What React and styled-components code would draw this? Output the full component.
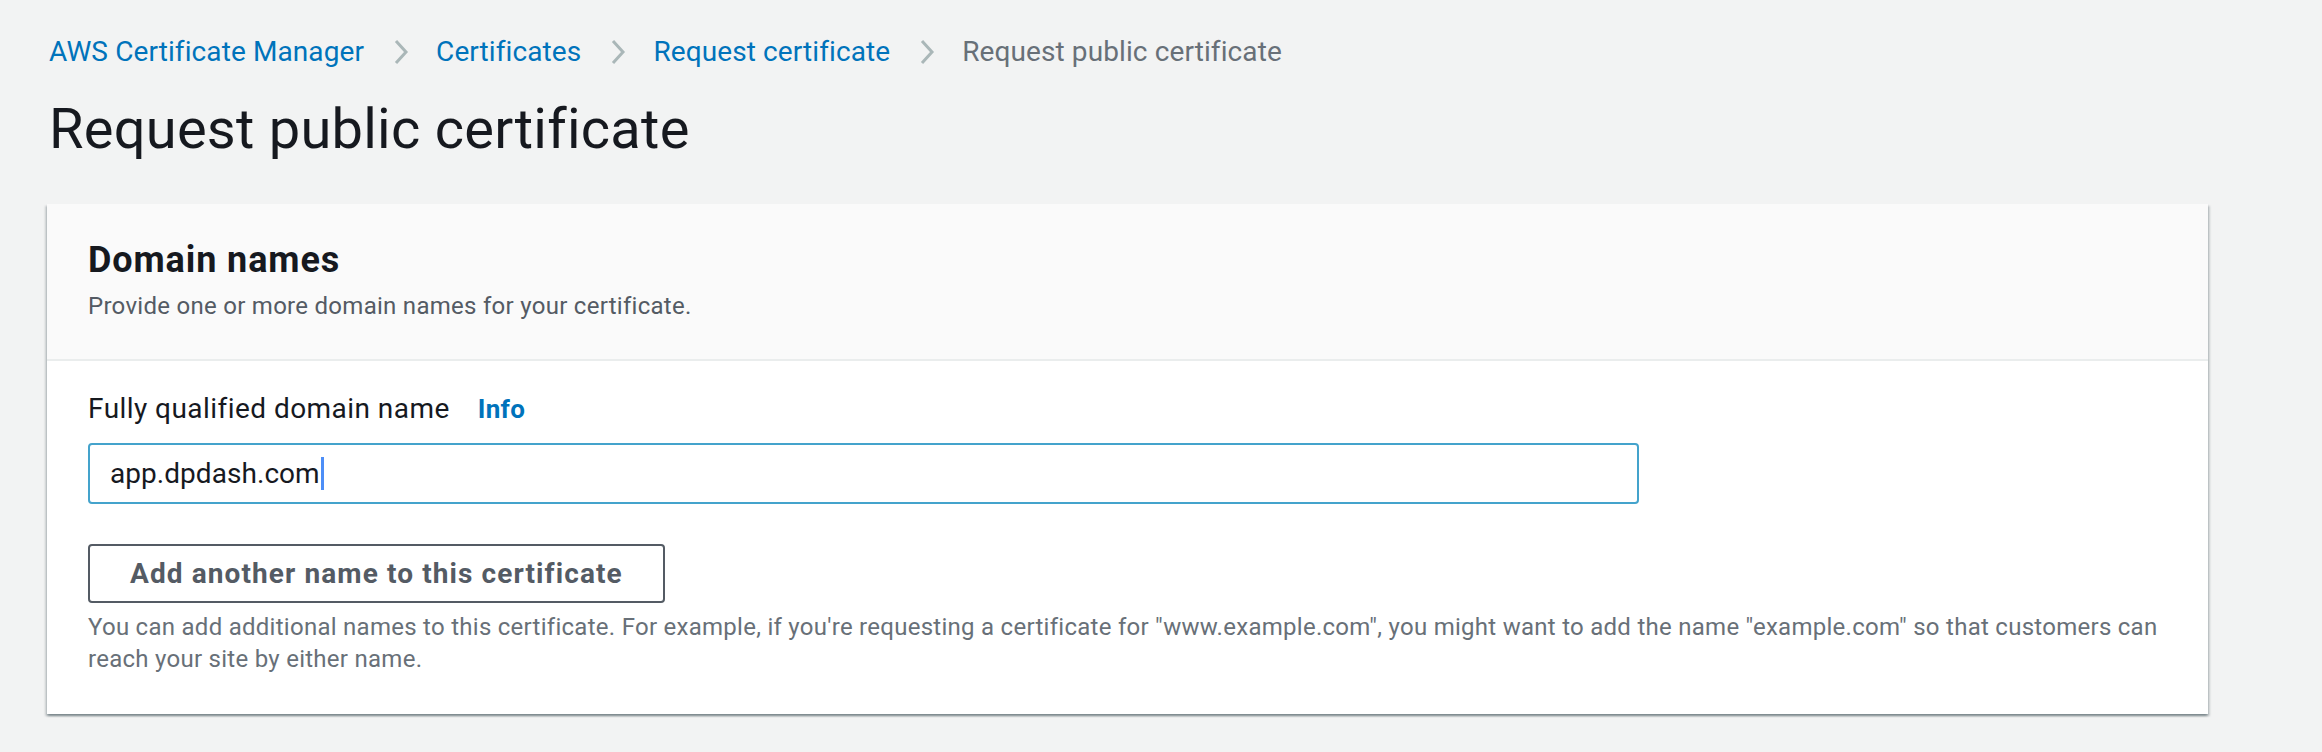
import React from 'react';
import styled, { createGlobalStyle } from 'styled-components';

const GlobalStyle = createGlobalStyle`
  body {
    margin: 0;
    background: #f2f3f3;
    font-family: Roboto, "Liberation Sans", Arial, sans-serif;
    color: #16191f;
  }
`;

const Page = styled.div`
  padding: 32px 114px 40px 47px;
`;

const Crumbs = styled.nav`
  display: flex;
  align-items: center;
  height: 40px;
  padding-left: 2px;
  font-size: 28px;
  line-height: 40px;
  letter-spacing: 0.1px;
`;

const Crumb = styled.a`
  color: ${(p) => (p.current ? '#687078' : '#0073bb')};
  text-decoration: none;
  white-space: nowrap;
`;

const Chevron = styled.svg`
  width: 16px;
  height: 28px;
  margin: 0 27px 0 29px;
  flex-shrink: 0;
`;

const Title = styled.h1`
  margin: 21px 0 39px 2px;
  font-size: 56px;
  line-height: 72px;
  font-weight: 400;
  letter-spacing: 0.25px;
  color: #16191f;
`;

const Card = styled.section`
  background: #fff;
  box-shadow: 0 2px 2px 0 rgba(0, 28, 36, 0.3), 2px 2px 2px 0 rgba(0, 28, 36, 0.15),
    -2px 2px 2px 0 rgba(0, 28, 36, 0.15);
`;

const CardHeader = styled.header`
  background: #fafafa;
  border-bottom: 2px solid #eaeded;
  padding: 34px 40px 37px 41px;
`;

const Heading = styled.h2`
  margin: 0 0 8px;
  font-size: 36px;
  line-height: 44px;
  font-weight: 700;
  letter-spacing: 0.9px;
`;

const Description = styled.p`
  margin: 0;
  font-size: 24px;
  line-height: 32px;
  letter-spacing: 0.28px;
  color: #545b64;
`;

const CardBody = styled.div`
  padding: 28px 40px 39px 41px;
`;

const LabelRow = styled.div`
  display: flex;
  align-items: baseline;
  gap: 28px;
  font-size: 28px;
  line-height: 40px;
`;

const Label = styled.label`
  color: #16191f;
  letter-spacing: 0.45px;
`;

const InfoLink = styled.a`
  color: #0073bb;
  font-weight: 700;
  font-size: 26px;
  letter-spacing: 0.3px;
  text-decoration: none;
`;

const InputBox = styled.div`
  margin-top: 14px;
  max-width: 1551px;
  height: 61px;
  box-sizing: border-box;
  border: 2px solid #44a3cc;
  border-radius: 4px;
  padding: 0 20px;
  display: flex;
  align-items: center;
  font-size: 28px;
  letter-spacing: 0.05px;
  color: #16191f;
`;

const Caret = styled.span`
  display: inline-block;
  width: 3px;
  height: 33px;
  background: #4d8ef7;
  margin-left: 1px;
`;

const Button = styled.button`
  margin-top: 40px;
  height: 59px;
  padding: 0 40px;
  box-sizing: border-box;
  border: 2px solid #545b64;
  border-radius: 4px;
  background: #fff;
  color: #545b64;
  font-family: inherit;
  font-size: 28px;
  font-weight: 700;
  letter-spacing: 1.1px;
  cursor: pointer;
`;

const Help = styled.p`
  margin: 8px 0 0;
  font-size: 24px;
  line-height: 32px;
  letter-spacing: 0.27px;
  color: #687078;
`;

const Sep = () => (
  <Chevron viewBox="0 0 16 28">
    <polyline points="3,3 13,14 3,25" fill="none" stroke="#aab7b8" strokeWidth="3" />
  </Chevron>
);

const App = () => {
  return (
    <Page>
      <GlobalStyle />
      <Crumbs>
        <Crumb href="#">AWS Certificate Manager</Crumb>
        <Sep />
        <Crumb href="#">Certificates</Crumb>
        <Sep />
        <Crumb href="#">Request certificate</Crumb>
        <Sep />
        <Crumb current>Request public certificate</Crumb>
      </Crumbs>
      <Title>Request public certificate</Title>
      <Card>
        <CardHeader>
          <Heading>Domain names</Heading>
          <Description>Provide one or more domain names for your certificate.</Description>
        </CardHeader>
        <CardBody>
          <LabelRow>
            <Label>Fully qualified domain name</Label>
            <InfoLink href="#">Info</InfoLink>
          </LabelRow>
          <InputBox>
            app.dpdash.com
            <Caret />
          </InputBox>
          <Button type="button">Add another name to this certificate</Button>
          <Help>
            You can add additional names to this certificate. For example, if you're requesting a
            certificate for "www.example.com", you might want to add the name "example.com" so that
            customers can reach your site by either name.
          </Help>
        </CardBody>
      </Card>
    </Page>
  );
};

export default App;
